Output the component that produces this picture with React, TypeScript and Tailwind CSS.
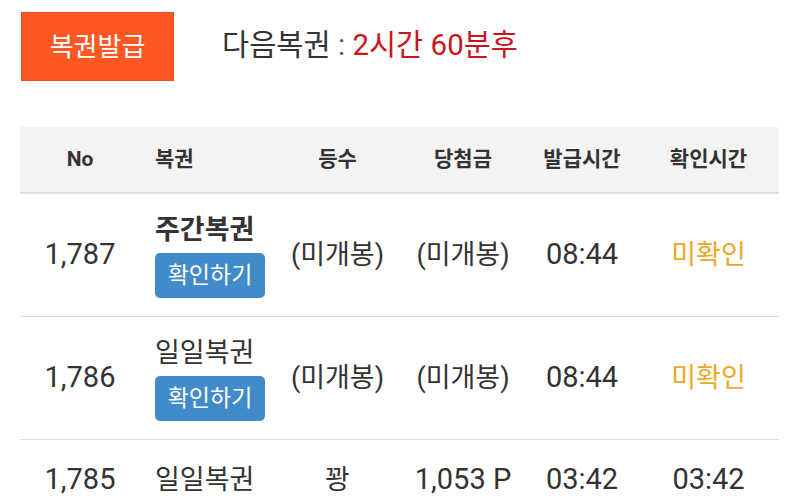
const rows = [
  { no: "1,787", name: "주간복권", bold: true, check: true, rank: "(미개봉)", prize: "(미개봉)", issued: "08:44", confirmed: "미확인" },
  { no: "1,786", name: "일일복권", bold: false, check: true, rank: "(미개봉)", prize: "(미개봉)", issued: "08:44", confirmed: "미확인" },
  { no: "1,785", name: "일일복권", bold: false, check: false, rank: "꽝", prize: "1,053 P", issued: "03:42", confirmed: "03:42" },
];

// digits in the reference run a bit larger than the hangul
const isNum = (s: string) => /^[0-9,:P ]+$/.test(s);

export default function App() {
  return (
    <div
      className="w-[800px] h-[503px] overflow-hidden bg-white text-[#333]"
      style={{ fontFamily: "Roboto, 'Noto Sans CJK KR', sans-serif" }}
    >
      <div className="flex items-center pl-[21px] pt-[12px] h-[81px]">
        <button className="w-[153px] h-[69px] bg-[#ff5722] border border-[#e4521f] text-white text-[26px] leading-none">
          복권발급
        </button>
        <div className="ml-[48px] text-[29.5px] leading-none pb-[2px]">
          다음복권 <span className="text-[#555]">:</span> <span className="text-[#c8161d]">2시간 60분후</span>
        </div>
      </div>

      <table className="ml-[20px] mt-[46px] w-[759px] table-fixed border-collapse">
        <colgroup>
          <col className="w-[120px]" />
          <col className="w-[135px]" />
          <col className="w-[125px]" />
          <col className="w-[126px]" />
          <col className="w-[112px]" />
          <col className="w-[141px]" />
        </colgroup>
        <thead>
          <tr className="bg-[#f3f3f3] h-[66px] border-b-2 border-[#dedede] text-[21px] font-bold text-[#333]">
            <th className="text-center font-bold">No</th>
            <th className="text-left pl-[15px] font-bold">복권</th>
            <th className="text-center font-bold">등수</th>
            <th className="text-center font-bold">당첨금</th>
            <th className="text-center font-bold">발급시간</th>
            <th className="text-center font-bold">확인시간</th>
          </tr>
        </thead>
        <tbody className="text-[27px]">
          {rows.map(r => (
            <tr key={r.no} className="border-b border-[#dedede]">
              <td className="text-center align-middle py-[18px] text-[29px]">{r.no}</td>
              <td className="pl-[15px] align-middle py-[18px]">
                <div className={r.bold ? "font-bold leading-[36px]" : "leading-[36px]"}>{r.name}</div>
                {r.check && (
                  <button className="mt-[5px] w-[110px] h-[45px] rounded-[5px] bg-[#428bca] text-white text-[23px] leading-none">
                    확인하기
                  </button>
                )}
              </td>
              <td className="text-center align-middle py-[18px]">{r.rank}</td>
              <td className={isNum(r.prize) ? "text-center align-middle py-[18px] text-[29px]" : "text-center align-middle py-[18px]"}>
                {r.prize}
              </td>
              <td className="text-center align-middle py-[18px] text-[29px]">{r.issued}</td>
              <td
                className={
                  r.confirmed === "미확인"
                    ? "text-center align-middle py-[18px] text-[#eba927]"
                    : "text-center align-middle py-[18px] text-[29px]"
                }
              >
                {r.confirmed}
              </td>
            </tr>
          ))}
        </tbody>
      </table>
    </div>
  );
}
